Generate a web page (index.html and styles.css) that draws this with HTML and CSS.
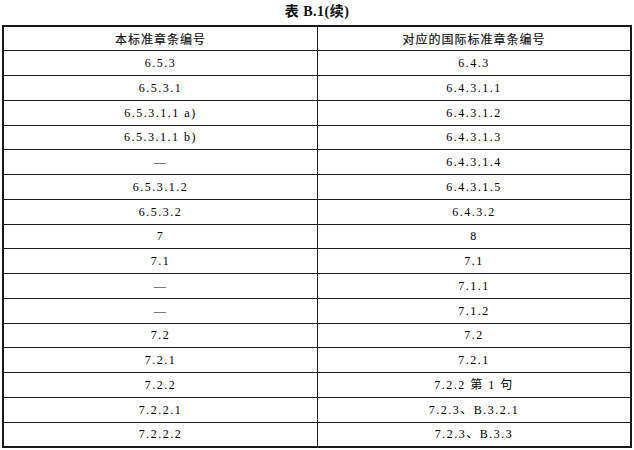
FILE: index.html
```html
<!DOCTYPE html>
<html lang="zh">
<head>
<meta charset="utf-8">
<title>表 B.1(续)</title>
<link rel="stylesheet" href="styles.css">
</head>
<body>
<div class="page">
  <div class="caption">表 B.1(续)</div>
  <table class="map">
    <thead>
      <tr><th>本标准章条编号</th><th>对应的国际标准章条编号</th></tr>
    </thead>
    <tbody>
      <tr><td>6.5.3</td><td>6.4.3</td></tr>
      <tr><td>6.5.3.1</td><td>6.4.3.1.1</td></tr>
      <tr><td>6.5.3.1.1 a)</td><td>6.4.3.1.2</td></tr>
      <tr><td>6.5.3.1.1 b)</td><td>6.4.3.1.3</td></tr>
      <tr><td>—</td><td>6.4.3.1.4</td></tr>
      <tr><td>6.5.3.1.2</td><td>6.4.3.1.5</td></tr>
      <tr><td>6.5.3.2</td><td>6.4.3.2</td></tr>
      <tr><td>7</td><td>8</td></tr>
      <tr><td>7.1</td><td>7.1</td></tr>
      <tr><td>—</td><td>7.1.1</td></tr>
      <tr><td>—</td><td>7.1.2</td></tr>
      <tr><td>7.2</td><td>7.2</td></tr>
      <tr><td>7.2.1</td><td>7.2.1</td></tr>
      <tr><td>7.2.2</td><td>7.2.2 第 1 句</td></tr>
      <tr><td>7.2.2.1</td><td>7.2.3、B.3.2.1</td></tr>
      <tr><td>7.2.2.2</td><td>7.2.3、B.3.3</td></tr>
    </tbody>
  </table>
</div>
</body>
</html>
```

FILE: styles.css
```css
html, body {
  margin: 0;
  padding: 0;
  background: #ffffff;
}

.page {
  width: 634px;
  height: 450px;
  overflow: hidden;
  color: #0d0d0d;
  font-family: "Liberation Serif", "Noto Sans CJK SC", serif;
}

.caption {
  height: 25px;
  line-height: 24px;
  text-align: center;
  font-size: 14px;
  font-weight: bold;
  letter-spacing: 0.5px;
}

.map {
  margin-left: 2px;
  width: 630px;
  border-collapse: collapse;
  table-layout: fixed;
  border: 2px solid #1a1a1a;
}

.map tr {
  height: 24.75px;
}

.map th,
.map td {
  border: 1px solid #1f1f1f;
  padding: 0;
  text-align: center;
  vertical-align: middle;
  font-size: 12px;
  line-height: 14px;
}

.map th {
  font-family: "Noto Sans CJK SC", sans-serif;
  font-weight: normal;
  letter-spacing: 1px;
  font-size: 12px;
  -webkit-text-stroke: 0.15px #0d0d0d;
}

.map td {
  font-family: "Liberation Serif", "Noto Sans CJK SC", serif;
  color: #000000;
  letter-spacing: 1.5px;
}

.map th:first-child,
.map td:first-child {
  width: 313px;
}
```
